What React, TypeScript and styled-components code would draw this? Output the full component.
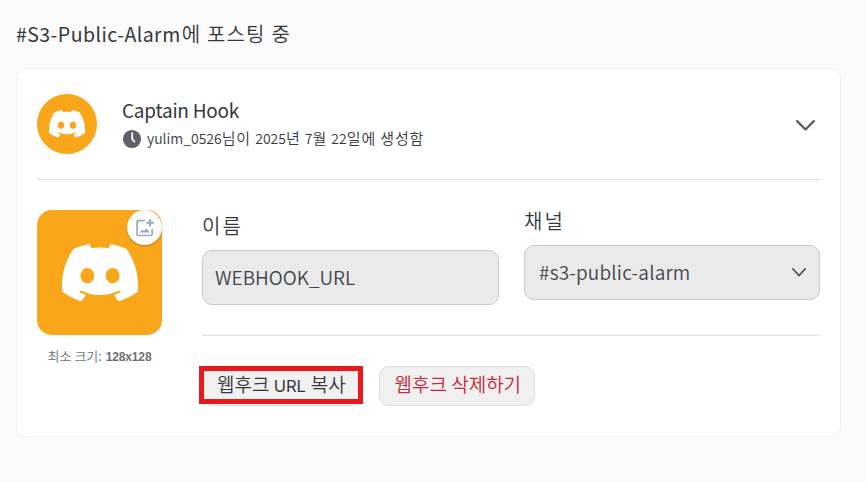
import React from "react";
import styled, { createGlobalStyle } from "styled-components";

const Global = createGlobalStyle`
  *, *::before, *::after { box-sizing: border-box; }
  body {
    margin: 0;
    background: #fbfbfb;
    color: #36373d;
    font-family: "Noto Sans CJK KR", sans-serif;
  }
`;

const Page = styled.main`
  width: 867px;
  height: 482px;
  padding: 20px 26px 0 16px;
  overflow: hidden;
`;

/* A single line of text made of Latin and Hangul runs. */
const Line = styled.div<{ $height: number }>`
  display: flex;
  align-items: baseline;
  height: ${(p) => p.$height}px;
  line-height: ${(p) => p.$height}px;
  white-space: pre;
`;

const Latin = styled.span<{ $size: number; $track?: number; $weight?: number }>`
  font-family: "Noto Sans CJK KR", sans-serif;
  font-size: ${(p) => p.$size}px;
  font-weight: ${(p) => p.$weight ?? 400};
  letter-spacing: ${(p) => p.$track ?? 0}px;
`;

const Hangul = styled.span<{ $size: number; $track?: number; $gap?: number }>`
  font-family: "Noto Sans CJK KR", sans-serif;
  font-size: ${(p) => p.$size}px;
  font-weight: 350;
  letter-spacing: ${(p) => p.$track ?? 0}px;
  margin-left: ${(p) => p.$gap ?? 0}px;
`;

const UiLatin = styled.span`
  font-family: Inter, sans-serif;
  font-size: 16.5px;
  font-weight: 400;
`;

const Title = styled.h1`
  margin: 0 0 20px;
  font-weight: 400;
`;

const Card = styled.section`
  width: 825px;
  height: 369px;
  padding: 0 20px;
  border: 1px solid #f2f2f3;
  border-radius: 10px;
  background: #fff;
`;

const Header = styled.header`
  display: flex;
  align-items: flex-start;
  height: 111px;
  padding-top: 25px;
  border-bottom: 1px solid #e0e0e1;
`;

const Avatar = styled.div`
  display: flex;
  align-items: center;
  justify-content: center;
  width: 60px;
  height: 60px;
  margin-right: 25px;
  border-radius: 50%;
  background: #faa61a;
`;

const Summary = styled.div`
  flex: 1;
  padding-top: 2px;
`;

const Meta = styled.div`
  display: flex;
  align-items: center;
  gap: 5px;
  margin-top: 4px;
`;

const MetaText = styled.div`
  padding-bottom: 2px;
`;

const HeaderChevron = styled.div`
  display: flex;
  padding: 26px 5px 0 0;
`;

const Body = styled.div`
  display: flex;
  gap: 40px;
  padding-top: 30px;
`;

const IconColumn = styled.div`
  display: flex;
  flex-direction: column;
  align-items: center;
  width: 125px;
`;

const IconTile = styled.div`
  position: relative;
  display: flex;
  align-items: center;
  justify-content: center;
  width: 125px;
  height: 125px;
  margin-bottom: 11px;
  border-radius: 15px;
  background: #faa61a;
`;

const UploadBadge = styled.div`
  position: absolute;
  top: 0;
  right: 0;
  display: flex;
  align-items: center;
  justify-content: center;
  width: 35px;
  height: 35px;
  border-radius: 50%;
  background: #fff;
  box-shadow: 0 1px 2px rgba(0, 0, 0, 0.25);
`;

const SizeHint = styled.div`
  color: #6f6f78;
`;

const HintSize = styled.span`
  margin-left: 1px;
  font: 700 12px "Liberation Sans", sans-serif;
  letter-spacing: -0.15px;
`;

const Form = styled.div`
  width: 618px;
`;

const Fields = styled.div`
  display: grid;
  grid-template-columns: 297px 296px;
  column-gap: 25px;
  height: 126px;
  border-bottom: 1px solid #e0e0e1;
`;

const Field = styled.div<{ $raised?: boolean }>`
  margin-top: ${(p) => (p.$raised ? -5 : 0)}px;
`;

const Label = styled.div`
  height: 40px;
  padding-top: 2px;
`;

const Control = styled.div<{ $inset: number }>`
  display: flex;
  align-items: center;
  justify-content: space-between;
  height: 55px;
  padding: 0 13px 0 ${(p) => p.$inset}px;
  border: 1px solid #c9c9ca;
  border-radius: 10px;
  background: #eaeaea;
`;

const Value = styled.div`
  padding-bottom: 2px;
  color: #45464d;
`;

const Actions = styled.div`
  display: flex;
  gap: 17px;
  padding-top: 30px;
`;

const Button = styled.button<{ $width: number; $inset: number; $danger?: boolean }>`
  position: relative;
  display: flex;
  width: ${(p) => p.$width}px;
  height: 40px;
  padding: 1px 0 0 ${(p) => p.$inset}px;
  border: 1px solid #dedede;
  border-radius: 10px;
  background: #f0f0f0;
  color: ${(p) => (p.$danger ? "#c5283b" : "#36373d")};
`;

const Highlight = styled.span`
  position: absolute;
  top: -1px;
  left: -4px;
  width: 164px;
  height: 38px;
  border: 5px solid #e8191c;
`;

function DiscordMark({ width, height }: { width: number; height: number }) {
  return (
    <svg width={width} height={height} viewBox="0 0 127.14 96.36" preserveAspectRatio="none" fill="#fff">
      <path d="M107.7,8.07A105.15,105.15,0,0,0,81.47,0a72.06,72.06,0,0,0-3.36,6.83A97.68,97.68,0,0,0,49,6.83,72.37,72.37,0,0,0,45.64,0,105.89,105.89,0,0,0,19.39,8.09C2.79,32.65-1.71,56.6.54,80.21h0A105.73,105.73,0,0,0,32.71,96.36,77.7,77.7,0,0,0,39.6,85.25a68.42,68.42,0,0,1-10.85-5.18c.91-.66,1.8-1.34,2.66-2a75.57,75.57,0,0,0,64.32,0c.87.71,1.76,1.39,2.66,2a68.68,68.68,0,0,1-10.87,5.19,77,77,0,0,0,6.89,11.1A105.25,105.25,0,0,0,126.6,80.22h0C129.24,52.84,122.09,29.11,107.7,8.07ZM42.45,65.69C36.18,65.69,31,60,31,53s5-12.74,11.43-12.74S54,46,53.89,53,48.84,65.69,42.45,65.69Zm42.24,0C78.41,65.69,73.25,60,73.25,53s5-12.74,11.44-12.74S96.23,46,96.12,53,91.08,65.69,84.69,65.69Z" />
    </svg>
  );
}

function Chevron({ width, height, stroke }: { width: number; height: number; stroke: number }) {
  return (
    <svg width={width} height={height} viewBox={`0 0 ${width} ${height}`} fill="none" stroke="#5c5c66" strokeWidth={stroke} strokeLinecap="round" strokeLinejoin="round">
      <path d={`M${stroke / 2} ${stroke / 2}L${width / 2} ${height - stroke / 2 - 0.4}L${width - stroke / 2} ${stroke / 2}`} />
    </svg>
  );
}

function ClockIcon() {
  return (
    <svg width="20" height="20" viewBox="0 0 20 20">
      <circle cx="10" cy="10" r="9.1" fill="#5f5f69" />
      <path d="M10.2 4.2V10L12.4 12.6" fill="none" stroke="#fff" strokeWidth="1.8" strokeLinecap="round" strokeLinejoin="round" />
    </svg>
  );
}

function AddImageIcon() {
  return (
    <svg width="20" height="20" viewBox="0 0 20 20" fill="none" stroke="#9aabb5" strokeWidth="1.7">
      <path d="M10 2.6H3.3Q2.1 2.6 2.1 3.8V16.3Q2.1 17.5 3.3 17.5H16Q17.2 17.5 17.2 16.3V11" />
      <path d="M15.1 .9V8.6M11.3 4.7H19" strokeWidth="2" />
      <path d="M4.8 14.6L7.2 11.6L8.9 13.3L11.4 10.3L14.6 14.6Z" fill="#9aabb5" stroke="none" />
    </svg>
  );
}

export default function App() {
  return (
    <>
      <Global />
      <Page>
        <Title>
          <Line $height={28}>
            <Latin $size={19.5} $track={0.45}>#S3-Public-Alarm</Latin>
            <Hangul $size={20} $track={1.2} $gap={1}>에 포스팅 중</Hangul>
          </Line>
        </Title>
        <Card>
          <Header>
            <Avatar><DiscordMark width={36} height={27.5} /></Avatar>
            <Summary>
              <Line $height={28}>
                <Latin $size={19} $track={-0.25}>Captain Hook</Latin>
              </Line>
              <Meta>
                <ClockIcon />
                <MetaText>
                  <Line $height={20}>
                    <Latin $size={14} $weight={350}>yulim_0526</Latin>
                    <Hangul $size={15} $track={0.85}>님이 </Hangul>
                    <Latin $size={14} $weight={350}>2025</Latin>
                    <Hangul $size={15} $track={0.85}>년 </Hangul>
                    <Latin $size={14} $weight={350}>7</Latin>
                    <Hangul $size={15} $track={0.85}>월 </Hangul>
                    <Latin $size={14} $weight={350}>22</Latin>
                    <Hangul $size={15} $track={0.85}>일에 생성함</Hangul>
                  </Line>
                </MetaText>
              </Meta>
            </Summary>
            <HeaderChevron><Chevron width={19} height={11} stroke={2.3} /></HeaderChevron>
          </Header>
          <Body>
            <IconColumn>
              <IconTile>
                <DiscordMark width={76} height={57.5} />
                <UploadBadge><AddImageIcon /></UploadBadge>
              </IconTile>
              <SizeHint>
                <Line $height={20}>
                  <Hangul $size={13}>최소 크기: </Hangul>
                  <HintSize>128x128</HintSize>
                </Line>
              </SizeHint>
            </IconColumn>
            <Form>
              <Fields>
                <Field>
                  <Label>
                    <Line $height={28}><Hangul $size={20} $track={2}>이름</Hangul></Line>
                  </Label>
                  <Control $inset={12}>
                    <Value>
                      <Line $height={28}><Latin $size={19} $weight={350}>WEBHOOK_URL</Latin></Line>
                    </Value>
                  </Control>
                </Field>
                <Field $raised>
                  <Label>
                    <Line $height={28}><Hangul $size={20} $track={2}>채널</Hangul></Line>
                  </Label>
                  <Control $inset={14}>
                    <Value>
                      <Line $height={28}><Latin $size={19} $weight={350} $track={0.2}>#s3-public-alarm</Latin></Line>
                    </Value>
                    <Chevron width={14} height={9} stroke={1.8} />
                  </Control>
                </Field>
              </Fields>
              <Actions>
                <Button $width={160} $inset={14}>
                  <Line $height={32}>
                    <Hangul $size={19}>웹후크 </Hangul>
                    <UiLatin>URL</UiLatin>
                    <Hangul $size={19} $gap={0.5}> 복사</Hangul>
                  </Line>
                  <Highlight />
                </Button>
                <Button $width={156} $inset={14.5} $danger>
                  <Line $height={32}><Hangul $size={19}>웹후크 삭제하기</Hangul></Line>
                </Button>
              </Actions>
            </Form>
          </Body>
        </Card>
      </Page>
    </>
  );
}
